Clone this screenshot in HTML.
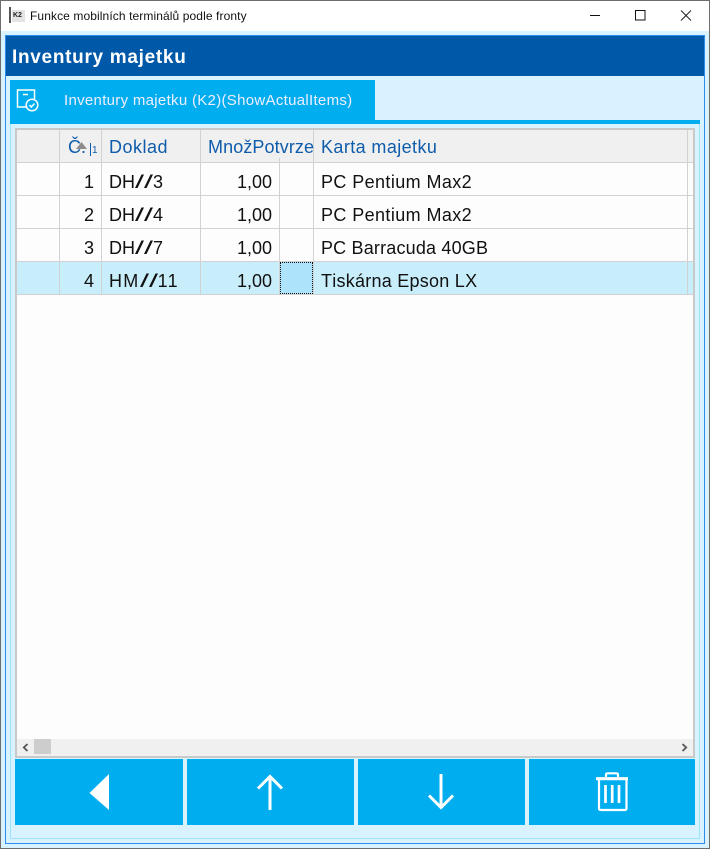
<!DOCTYPE html>
<html><head><meta charset="utf-8">
<style>
html,body{margin:0;padding:0;background:#fff}
#p{position:relative;width:710px;height:849px;overflow:hidden;background:#d9f2ff;font-family:"Liberation Sans",sans-serif}
#p div{position:absolute;box-sizing:border-box}
.t{white-space:nowrap;line-height:20px;height:20px}
.h{color:#0f5cab;font-size:18px}
.c{color:#111;font-size:18px;font-kerning:none}
.r{text-align:right}
.s{display:inline-block;width:18px;transform:scaleX(1.8);transform-origin:0 50%}
.v{background:#d2d2d2;width:1px}
.l{background:#d2d2d2;height:1px;left:17px;width:676px}
.b{background:#00aeef;top:759px;height:66px}
svg{position:absolute}
</style></head><body><div id="p">
<!-- window frame -->
<div style="left:0;top:0;width:710px;height:31px;background:#fff"></div>
<div style="left:0;top:0;width:710px;height:1px;background:#6d6d6d"></div>
<div style="left:0;top:0;width:1px;height:849px;background:#6d6d6d"></div>
<div style="left:709px;top:0;width:1px;height:849px;background:#6d6d6d"></div>
<div style="left:0;top:848px;width:710px;height:1px;background:#6d6d6d"></div>
<!-- title -->
<div style="left:9px;top:7px;width:2px;height:16px;background:#555"></div>
<div style="left:12px;top:10px;width:13px;height:12px;background:#e4e4e4"></div>
<div class="t" style="left:13px;top:12px;width:12px;height:8px;line-height:8px;font-size:7px;font-weight:bold;color:#222">K2</div>
<div class="t" style="left:30px;top:6px;font-size:12px;color:#111;letter-spacing:.1px">Funkce mobilních terminálů podle fronty</div>
<svg style="left:590px;top:10px" width="110" height="12"><path d="M0 5.5H10" stroke="#111" fill="none"/><path d="M45.500 .5H55V10H45.500Z" stroke="#111" fill="none"/><path d="M91 0.5L101 10.5M101 0.5L91 10.5" stroke="#222" fill="none"/></svg>
<!-- blue frame -->
<div style="left:5px;top:35px;width:700px;height:809px;border:1px solid #2d8cf0"></div>
<div style="left:6px;top:36px;width:698px;height:40px;background:#0058a8"></div>
<div class="t" style="left:12px;top:48px;font-size:19px;font-weight:bold;color:#fff;letter-spacing:.7px">Inventury majetku</div>
<!-- inner frame -->
<div style="left:10px;top:120px;width:690px;height:719px;border:1px solid #9fe2fb;border-top:0"></div>
<!-- tab -->
<div style="left:10px;top:80px;width:365px;height:40px;background:#00aeef"></div>
<div style="left:10px;top:120px;width:690px;height:4px;background:#00aeef"></div>
<svg style="left:16px;top:89px" width="24" height="24" fill="none" stroke="#fff" stroke-width="1.5"><path d="M10 18H1.500V1H18.500V10"/><path d="M7 5.500H12"/><circle cx="16" cy="16" r="5.800" fill="#00aeef"/><path d="M13.500 16L15.300 18L18.500 14.600"/></svg>
<div class="t" style="left:64px;top:91px;font-size:15px;color:#eef;letter-spacing:.3px">Inventury majetku (K2)(ShowActualItems)</div>
<!-- grid -->
<div style="left:15px;top:128px;width:680px;height:630px;background:#fdfdfd;border:2px solid #c9c9c9"></div>
<div style="left:17px;top:130px;width:676px;height:32px;background:#f0f0f0"></div>
<div style="left:17px;top:262px;width:676px;height:32px;background:#c9eefb"></div>
<div class="l" style="top:162px"></div><div class="l" style="top:195px"></div><div class="l" style="top:228px"></div><div class="l" style="top:261px"></div><div class="l" style="top:294px"></div>
<div class="v" style="left:59px;top:130px;height:165px"></div>
<div class="v" style="left:101px;top:130px;height:165px"></div>
<div class="v" style="left:200px;top:130px;height:165px"></div>
<div class="v" style="left:279px;top:158px;height:137px"></div>
<div class="v" style="left:313px;top:130px;height:165px"></div>
<div class="v" style="left:687px;top:130px;height:165px"></div>
<!-- header -->
<div class="t h" style="left:68px;top:137px">Č.</div>
<svg style="left:75px;top:140px" width="24" height="20"><path d="M1 9L6.500 2L12 9Z" fill="#8c8c8c"/><path d="M15.500 3V16" stroke="#0f5cab" fill="none"/></svg>
<div class="t" style="left:92px;top:141px;font-size:10px;color:#0f5cab">1</div>
<div class="t h" style="left:109px;top:137px;letter-spacing:.5px">Doklad</div>
<div class="t h" style="left:208px;top:137px;width:106px;overflow:hidden;letter-spacing:.1px">MnožPotvrzeni</div>
<div class="t h" style="left:321px;top:137px;letter-spacing:.4px">Karta majetku</div>
<!-- rows -->
<div class="t c r" style="left:60px;top:172px;width:34px">1</div><div class="t c" style="left:109px;top:172px">DH<span class="s">//</span>3</div><div class="t c r" style="left:201px;top:172px;width:71px">1,00</div><div class="t c" style="left:321px;top:172px;letter-spacing:.4px">PC Pentium Max2</div>
<div class="t c r" style="left:60px;top:205px;width:34px">2</div><div class="t c" style="left:109px;top:205px">DH<span class="s">//</span>4</div><div class="t c r" style="left:201px;top:205px;width:71px">1,00</div><div class="t c" style="left:321px;top:205px;letter-spacing:.4px">PC Pentium Max2</div>
<div class="t c r" style="left:60px;top:238px;width:34px">3</div><div class="t c" style="left:109px;top:238px">DH<span class="s">//</span>7</div><div class="t c r" style="left:201px;top:238px;width:71px">1,00</div><div class="t c" style="left:321px;top:238px;letter-spacing:.18px">PC Barracuda 40GB</div>
<div class="t c r" style="left:60px;top:271px;width:34px">4</div><div class="t c" style="left:109px;top:271px"><span style="letter-spacing:1.3px">HM</span><span class="s">//</span>11</div><div class="t c r" style="left:201px;top:271px;width:71px">1,00</div><div class="t c" style="left:321px;top:271px;letter-spacing:.25px">Tiskárna Epson LX</div>
<div style="left:280px;top:262px;width:33px;height:32px;background:#ade4fc;border:1px dotted #111"></div>
<!-- scrollbar -->
<div style="left:17px;top:739px;width:676px;height:17px;background:#f0f0f0"></div>
<div style="left:34px;top:739px;width:17px;height:15px;background:#cdcdcd"></div>
<svg style="left:22px;top:743px" width="8" height="10" fill="none" stroke="#555" stroke-width="1.8"><path d="M5.500 1L1.800 4.500L5.500 8"/></svg>
<svg style="left:681px;top:743px" width="8" height="10" fill="none" stroke="#555" stroke-width="1.8"><path d="M1.500 1L5.200 4.500L1.500 8"/></svg>
<!-- buttons -->
<div class="b" style="left:15px;width:168px"></div>
<div class="b" style="left:187px;width:167px"></div>
<div class="b" style="left:358px;width:167px"></div>
<div class="b" style="left:529px;width:166px"></div>
<svg style="left:85px;top:770px" width="30" height="44"><path d="M4.500 23L24 4V40Z" fill="#fff"/></svg>
<svg style="left:250px;top:770px" width="40" height="44" fill="none" stroke="#fff" stroke-width="3"><path d="M20 6V40"/><path d="M8 18.500L20 6.500L32 18.500"/></svg>
<svg style="left:421px;top:770px" width="40" height="44" fill="none" stroke="#fff" stroke-width="3"><path d="M20 4V38"/><path d="M8 25.500L20 37.500L32 25.500"/></svg>
<svg style="left:594px;top:770px" width="40" height="44" fill="none" stroke="#fff" stroke-width="2.200"><path d="M2 8.700H34" stroke-width="3.200"/><path d="M12 7V4.500Q12 3.300 14 3.300H22Q24 3.300 24 4.500V7"/><path d="M5 10V38.500Q5 40 7 40H30.500Q32.500 40 32.500 38.500V10"/><path d="M11.500 15V33M18.200 15V33M25 15V33" stroke-width="2.700"/></svg>
</div></body></html>
